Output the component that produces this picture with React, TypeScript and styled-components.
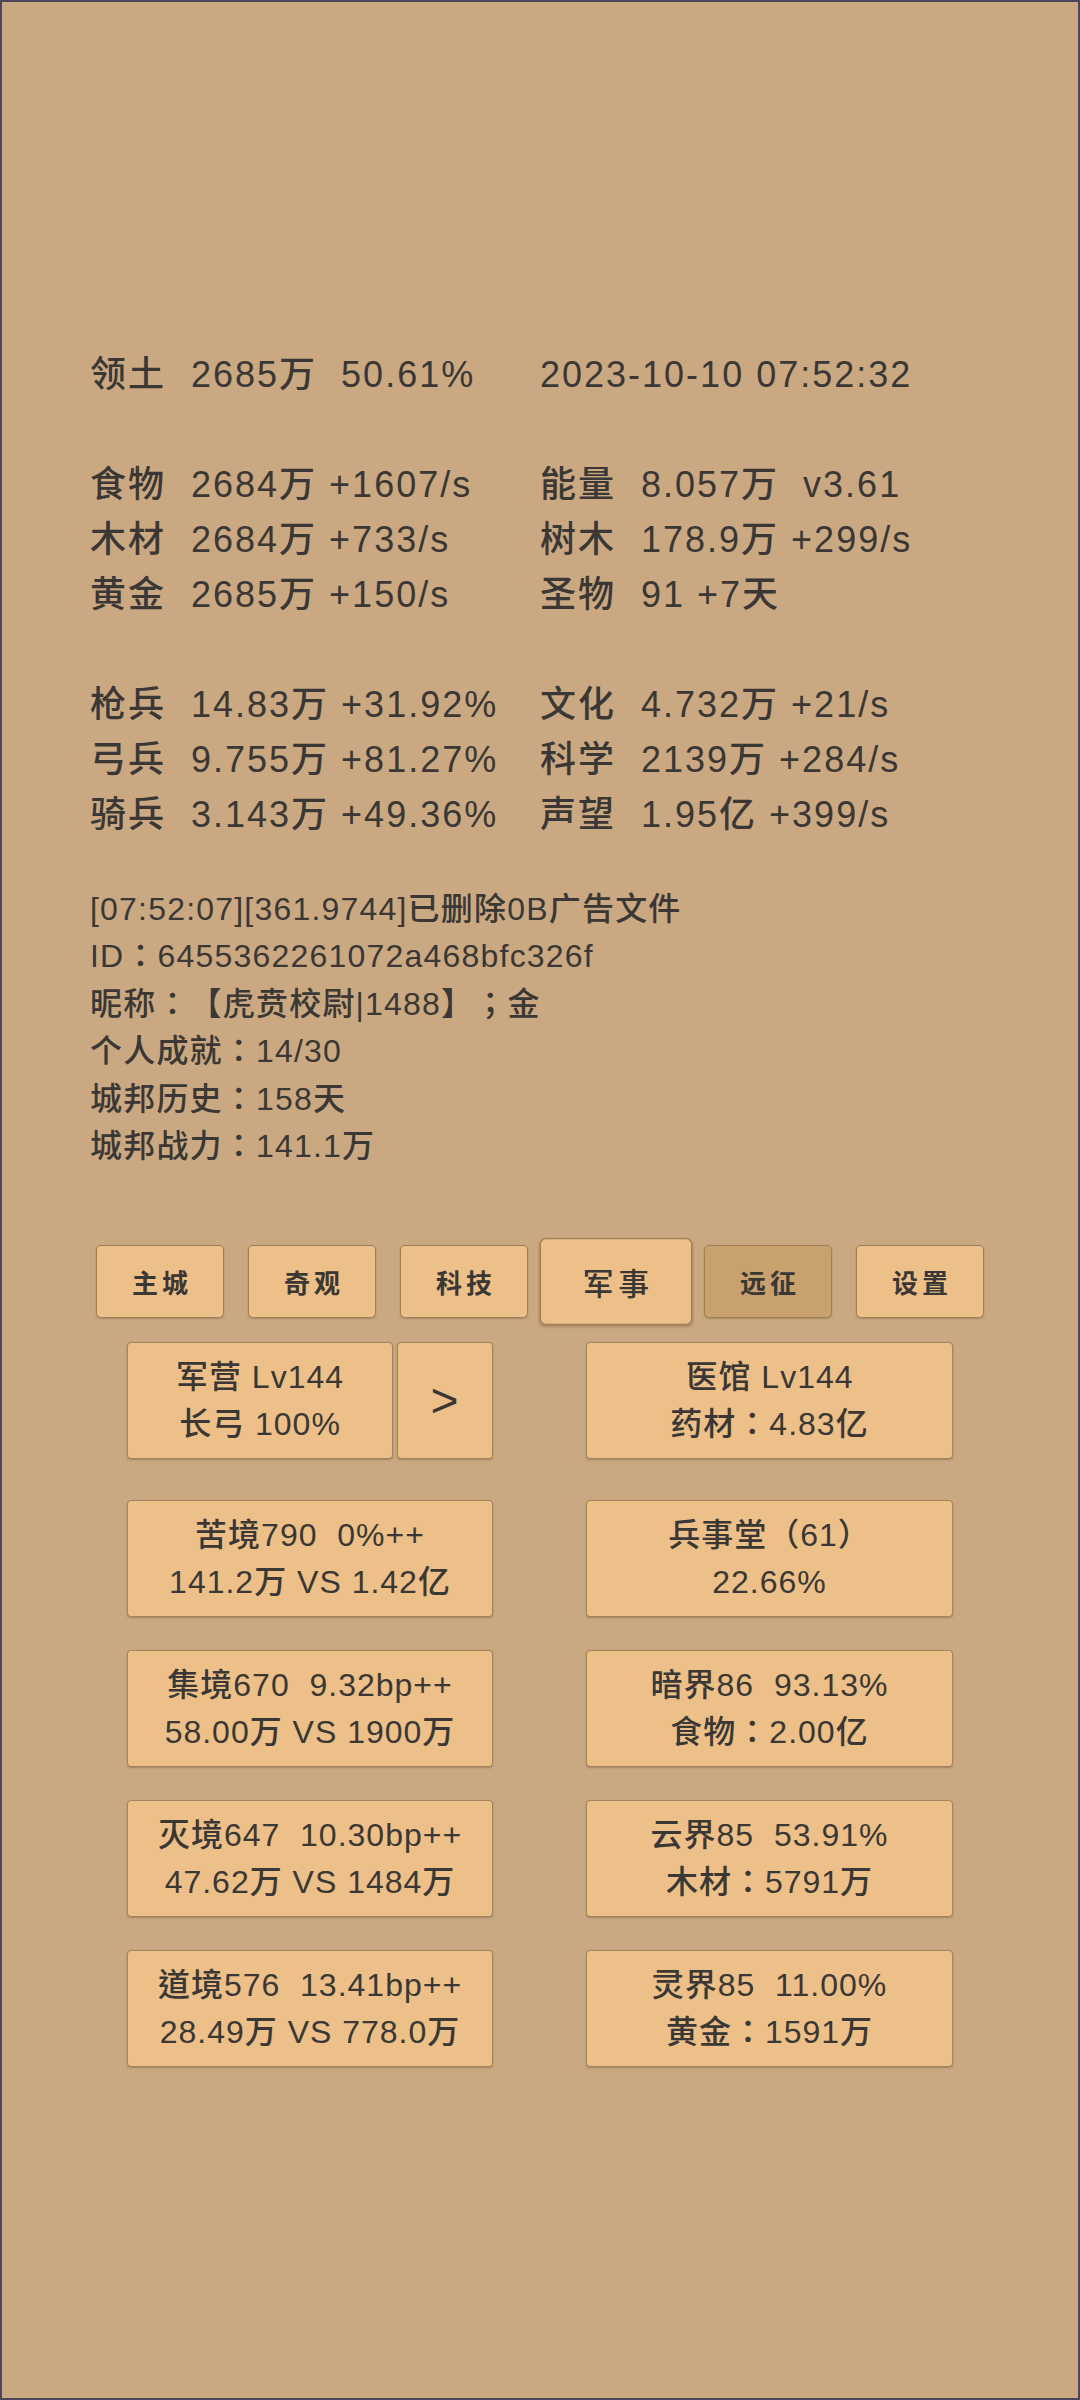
import styled, { createGlobalStyle } from "styled-components"

const GlobalStyle = createGlobalStyle`
  body {
    margin: 0;
    background: #caa982;
  }
`

const Page = styled.div`
  box-sizing: border-box;
  width: 1080px;
  height: 2400px;
  border: 2px solid #4b4659;
  background: #caa982;
  padding-top: 345px;
  color: #3a3734;
  font-family: "Liberation Sans", "Noto Sans CJK SC", sans-serif;
  font-weight: 500;
  text-spacing-trim: space-all;
`

const Stats = styled.div`
  display: grid;
  grid-template-columns: 450px 1fr;
  grid-auto-rows: 55px;
  padding-left: 88px;
  font-size: 36px;
  line-height: 55px;
  letter-spacing: 2px;
  white-space: pre;
`

const Stat = styled.div`
  display: flex;
`

const Label = styled.span`
  width: 101px;
  flex-shrink: 0;
`

const Blank = styled.div`
  grid-column: 1 / -1;
`

// colons and brackets sit centred in the reference, as in the TC forms
const Log = styled.div`
  margin-top: 44px;
  padding-left: 88px;
  font-family: "Liberation Sans", "Noto Sans CJK TC", sans-serif;
  font-size: 32px;
  line-height: 47.4px;
  letter-spacing: 1.2px;
  white-space: pre;
`

const Tabs = styled.div`
  display: flex;
  justify-content: center;
  align-items: center;
  gap: 24px;
  margin-top: 75px;
`

const Tab = styled.div<{ $active?: boolean; $pressed?: boolean }>`
  box-sizing: border-box;
  width: 128px;
  height: 73px;
  display: flex;
  align-items: center;
  justify-content: center;
  padding-left: 4px;
  background: ${props => props.$pressed ? "#c9a16e" : "#ecc088"};
  border: 1px solid #a07e57;
  border-radius: 5px;
  box-shadow: 0 1px 2px rgba(90, 60, 30, 0.3);
  font-size: 26px;
  font-weight: ${props => props.$active ? 500 : 700};
  letter-spacing: 4px;
  transform: ${props => props.$active ? "scale(1.19)" : "none"};
`

const Board = styled.div`
  display: grid;
  grid-template-columns: 366px 367px;
  column-gap: 93px;
  row-gap: 33px;
  justify-content: center;
  margin-top: 24px;
`

const Pair = styled.div<{ $first?: boolean }>`
  display: flex;
  gap: 4px;
  margin-bottom: ${props => props.$first ? "8px" : "0"};
`

const Tile = styled.div<{ $big?: boolean }>`
  box-sizing: border-box;
  flex: 1;
  height: 117px;
  display: flex;
  flex-direction: column;
  align-items: center;
  justify-content: center;
  background: #ecc088;
  border: 1px solid #a3835c;
  border-radius: 4px;
  box-shadow: 0 1px 2px rgba(90, 60, 30, 0.35);
  font-family: "Liberation Sans", "Noto Sans CJK TC", sans-serif;
  font-size: ${props => props.$big ? "48px" : "32px"};
  font-weight: ${props => props.$big ? 400 : 500};
  line-height: 47px;
  letter-spacing: 1px;
  white-space: pre;
`

const Arrow = styled(Tile)`
  flex: 0 0 96px;
`

type Row = [string, string] | [string, string, string, string] | null

const stats: Row[] = [
  ["领土", "2685万  50.61%", "", "2023-10-10 07:52:32"],
  null,
  ["食物", "2684万 +1607/s", "能量", "8.057万  v3.61"],
  ["木材", "2684万 +733/s", "树木", "178.9万 +299/s"],
  ["黄金", "2685万 +150/s", "圣物", "91 +7天"],
  null,
  ["枪兵", "14.83万 +31.92%", "文化", "4.732万 +21/s"],
  ["弓兵", "9.755万 +81.27%", "科学", "2139万 +284/s"],
  ["骑兵", "3.143万 +49.36%", "声望", "1.95亿 +399/s"],
]

const logLines = [
  "[07:52:07][361.9744]已删除0B广告文件",
  "ID：6455362261072a468bfc326f",
  "昵称：【虎贲校尉|1488】；金",
  "个人成就：14/30",
  "城邦历史：158天",
  "城邦战力：141.1万",
]

const tabs = ["主城", "奇观", "科技", "军事", "远征", "设置"]

const tiles: [string, string][] = [
  ["苦境790  0%++", "141.2万 VS 1.42亿"],
  ["兵事堂（61）", "22.66%"],
  ["集境670  9.32bp++", "58.00万 VS 1900万"],
  ["暗界86  93.13%", "食物：2.00亿"],
  ["灭境647  10.30bp++", "47.62万 VS 1484万"],
  ["云界85  53.91%", "木材：5791万"],
  ["道境576  13.41bp++", "28.49万 VS 778.0万"],
  ["灵界85  11.00%", "黄金：1591万"],
]

function App () {
  return (
    <Page>
      <GlobalStyle />
      <Stats>
        {stats.map((row, i) => {
          if (!row) return <Blank key={i} />
          return [
            <Stat key={i + "a"}>
              <Label>{row[0]}</Label>
              <span>{row[1]}</span>
            </Stat>,
            row.length === 4 ? (
              <Stat key={i + "b"}>
                {row[2] ? <Label>{row[2]}</Label> : null}
                <span>{row[3]}</span>
              </Stat>
            ) : null,
          ]
        })}
      </Stats>
      <Log>
        {logLines.map(line => <div key={line}>{line}</div>)}
      </Log>
      <Tabs>
        {tabs.map(t => (
          <Tab key={t} $active={t === "军事"} $pressed={t === "远征"}>{t}</Tab>
        ))}
      </Tabs>
      <Board>
        <Pair $first>
          <Tile>
            <div>军营 Lv144</div>
            <div>长弓 100%</div>
          </Tile>
          <Arrow $big>&gt;</Arrow>
        </Pair>
        <Pair $first>
          <Tile>
            <div>医馆 Lv144</div>
            <div>药材：4.83亿</div>
          </Tile>
        </Pair>
        {tiles.map(([a, b]) => (
          <Pair key={a}>
            <Tile>
              <div>{a}</div>
              <div>{b}</div>
            </Tile>
          </Pair>
        ))}
      </Board>
    </Page>
  )
}

export default App
